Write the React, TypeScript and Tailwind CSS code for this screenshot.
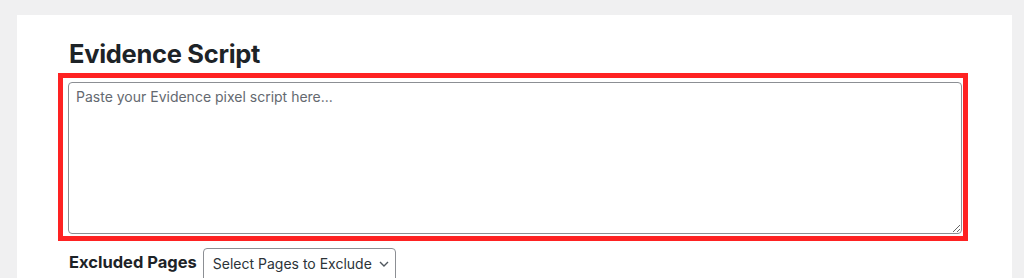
import React from "react";

// settings panel: pixel script textarea + excluded pages select
export default function App() {
  return (
    <div className="h-[278px] w-full overflow-hidden bg-[#f0f0f1] pl-[17px] pt-[15px] font-['Inter','Liberation_Sans',sans-serif] text-[#1d2327]">
      <div className="h-[263px] w-[995px] overflow-hidden bg-white pl-[41px]">
        <h2 className="pl-[11px] pt-[23px] text-[25.5px] font-bold leading-[31px] tracking-[-0.3px] text-[#1d2327]">
          Evidence Script
        </h2>
        <div className="mt-[4px] w-[910px] border-[5px] border-[#fe2222] pb-[2px] pl-[5px] pr-[1px] pt-[4px]">
          <textarea
            className="block h-[152px] w-full resize-y rounded-[4px] border border-[#8c8f94] px-[7px] py-[4px] text-[14px] leading-[20px] text-[#2c3338] placeholder:text-[#646970] focus:outline-none"
            placeholder="Paste your Evidence pixel script here..."
          />
        </div>
        <div className="mt-[7px] flex items-start gap-[6px] pl-[11px]">
          <label className="pt-[3px] text-[16.5px] font-bold leading-[22px] text-[#1d2327]">
            Excluded Pages
          </label>
          <button
            type="button"
            className="flex h-[36px] w-[193px] items-start gap-[7px] rounded-[4px] border border-[#8c8f94] bg-white pl-[9px] pt-[4px] text-[14px] leading-[22px] text-[#2c3338]"
          >
            <span>Select Pages to Exclude</span>
            <svg className="mt-[8px]" width="10" height="6" viewBox="0 0 10 6" fill="none">
              <path d="M1 1l4 4 4-4" stroke="#50575e" strokeWidth="1.4" />
            </svg>
          </button>
        </div>
      </div>
    </div>
  );
}
